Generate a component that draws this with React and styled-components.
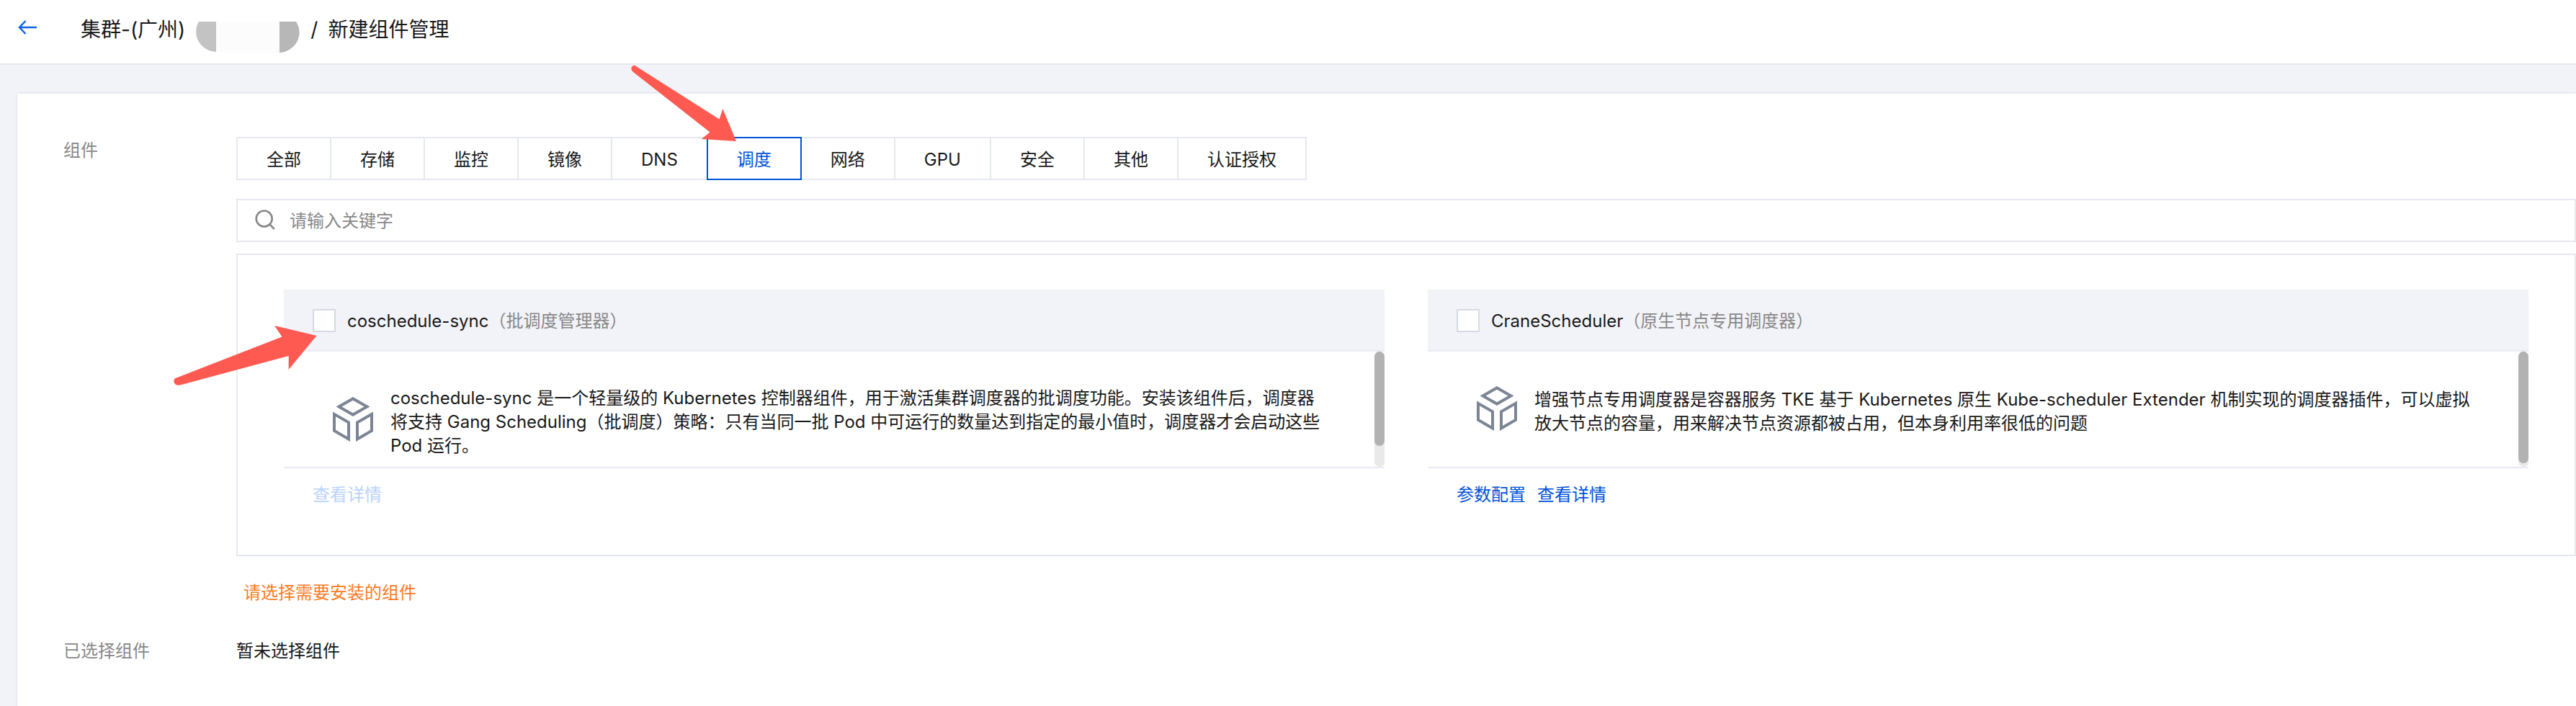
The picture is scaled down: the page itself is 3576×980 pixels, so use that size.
import React from "react";
import styled, { createGlobalStyle } from "styled-components";

const GlobalStyle = createGlobalStyle`
  *, *::before, *::after { box-sizing: border-box; }
  html, body, #root { min-height: 100vh; }
  body {
    margin: 0;
    background: #f2f3f8;
    color: #181818;
    font-family: Inter, "Noto Sans CJK SC", sans-serif;
    font-size: 24px;
    line-height: 33px;
    overflow-x: hidden;
  }
  button, input { font: inherit; color: inherit; }
`;

const Page = styled.div`
  position: relative;
  min-height: 100vh;
  display: flex;
  flex-direction: column;
`;

const Header = styled.header`
  display: flex;
  align-items: center;
  height: 90px;
  padding: 0 24px 6px;
  background: #fff;
  border-bottom: 2px solid #e6e8ef;
  font-size: 28px;
  line-height: 40px;
`;

const BackButton = styled.button`
  display: flex;
  width: 28px;
  margin: 0 60px 6px 0;
  padding: 0;
  border: 0;
  background: none;
`;

const Crumb = styled.h1`
  display: flex;
  align-items: center;
  gap: 14px;
  margin: 0;
  font-size: inherit;
  font-weight: 400;
  white-space: nowrap;
`;

const Mask = styled.svg`
  width: 146px;
  height: 43px;
  margin-top: 21px;
`;

const Panel = styled.main`
  flex: 1;
  margin: 40px 0 0 24px;
  padding: 60px 0 60px 64px;
  background: #fff;
  box-shadow: 0 0 4px rgba(54, 58, 80, 0.12);
`;

const Field = styled.section`
  display: flex;
  margin-bottom: 48px;
`;

const FieldLabel = styled.div`
  flex: 0 0 240px;
  padding-top: ${(p) => (p.$offset ? "2px" : "0")};
  color: #888;
`;

const FieldBody = styled.div`
  flex: 1;
  min-width: 0;
`;

const Tabs = styled.div`
  display: flex;
`;

const Tab = styled.button`
  position: relative;
  z-index: ${(p) => (p.$active ? 1 : 0)};
  height: 60px;
  padding: 2px 40px 0;
  margin-left: -2px;
  border: 2px solid ${(p) => (p.$active ? "#0052d9" : "#e5e8ef")};
  background: #fff;
  color: ${(p) => (p.$active ? "#0052d9" : "inherit")};
  white-space: nowrap;
  &:first-child { margin-left: 0; }
`;

const SearchBox = styled.label`
  display: flex;
  align-items: center;
  gap: 18px;
  height: 60px;
  margin: 26px 0 16px;
  padding: 0 24px;
  border: 2px solid #e5e8ef;
`;

const SearchInput = styled.input`
  flex: 1;
  padding: 0;
  border: 0;
  outline: 0;
  background: none;
  &::placeholder { color: #888; opacity: 1; }
`;

const CardGrid = styled.div`
  display: grid;
  grid-template-columns: 1fr 1fr;
  gap: 60px;
  padding: 48px 64px;
  border: 2px solid #e5e8ef;
`;

const Card = styled.article`
  min-width: 0;
`;

const CardHead = styled.label`
  display: flex;
  align-items: center;
  height: 86px;
  padding: 2px 40px 0;
  background: #f2f3f8;
  border-bottom: 2px solid #e8ebf1;
`;

const Checkbox = styled.input`
  appearance: none;
  width: 32px;
  height: 32px;
  margin: 0 16px 0 0;
  border: 2px solid #d5dae3;
  background: #fff;
`;

const Alias = styled.span`
  color: #888;
`;

const CardBody = styled.div`
  position: relative;
  border-bottom: 2px solid #e8ebf1;
`;

const ScrollArea = styled.div`
  height: 160px;
  overflow-y: auto;
  scrollbar-width: none;
`;

const ScrollTrack = styled.div`
  position: absolute;
  top: 0;
  right: 0;
  bottom: 0;
  width: 14px;
  border-radius: 7px;
  background: #e9e9e9;
`;

const ScrollThumb = styled.div`
  height: ${(p) => p.$size}%;
  border-radius: 7px;
  background: #b2b2b2;
`;

const CardInfo = styled.div`
  display: flex;
  align-items: center;
  gap: 24px;
  padding: 48px 78px 48px 68px;
`;

const CubeBox = styled.div`
  display: flex;
  align-items: flex-start;
  flex: none;
  height: 70px;
`;

const Desc = styled.p`
  flex: 1;
  margin: 0;
`;

const CardFoot = styled.div`
  display: flex;
  gap: 16px;
  height: 72px;
  padding: 20px 40px 0;
`;

const Link = styled.a`
  color: ${(p) => (p.$disabled ? "#bad3fb" : "#0052d9")};
  text-decoration: none;
`;

const Warning = styled.p`
  margin: 34px 0 0 10px;
  color: #ff7a1f;
`;

const Annotations = styled.svg`
  position: absolute;
  top: 0;
  left: 0;
  width: 1100px;
  height: 560px;
  pointer-events: none;
  z-index: 2;
`;

function BackIcon() {
  return (
    <svg width="28" height="20" viewBox="0 0 28 20" fill="none" stroke="#0f62e6" strokeWidth="2.5">
      <path d="M11.500 1 3 10l8.500 9M3 10h24" />
    </svg>
  );
}

function SearchIcon() {
  return (
    <svg width="30" height="30" viewBox="0 0 30 30" fill="none" stroke="#888" strokeWidth="2.6">
      <circle cx="12.700" cy="12.500" r="11" />
      <path d="m20.500 20.500 6.300 6.500" />
    </svg>
  );
}

function CubeIcon() {
  return (
    <svg width="56" height="62" viewBox="0 0 56 62" fill="#7c8594" fillRule="evenodd">
      <path d="M28 0 51.500 13.500 28 27 4.500 13.500zM28 4.700 12.500 13.500 28 22.300 43.500 13.500z" />
      <path d="M0 20.500 24 34.200V62L0 48zM4 27.300V45.700L20 55V36.600z" />
      <path d="M56 20.500 32 34.200V62L56 48zM52 27.300V45.700L36 55V36.600z" />
    </svg>
  );
}

const TABS = ["全部", "存储", "监控", "镜像", "DNS", "调度", "网络", "GPU", "安全", "其他", "认证授权"];

const ADDONS = [
  {
    name: "coschedule-sync",
    alias: "（批调度管理器）",
    desc: "coschedule-sync 是一个轻量级的 Kubernetes 控制器组件，用于激活集群调度器的批调度功能。安装该组件后，调度器将支持 Gang Scheduling（批调度）策略：只有当同一批 Pod 中可运行的数量达到指定的最小值时，调度器才会启动这些 Pod 运行。",
    thumb: 82,
    links: [{ text: "查看详情", disabled: true }],
  },
  {
    name: "CraneScheduler",
    alias: "（原生节点专用调度器）",
    desc: "增强节点专用调度器是容器服务 TKE 基于 Kubernetes 原生 Kube-scheduler Extender 机制实现的调度器插件，可以虚拟放大节点的容量，用来解决节点资源都被占用，但本身利用率很低的问题",
    thumb: 97,
    links: [{ text: "参数配置" }, { text: "查看详情" }],
  },
];

export default function App() {
  return (
    <Page lang="zh-CN">
      <GlobalStyle />
      <Header>
        <BackButton aria-label="返回"><BackIcon /></BackButton>
        <Crumb>
          <span>集群-(广州)</span>
          <Mask viewBox="0 0 146 43" aria-hidden="true">
            <path fill="#fcfcfc" d="M29 0h88v43H29z" />
            <path fill="#c3c3c3" d="M5 0h24v42A29 28 0 0 1 5 0z" />
            <path fill="#b7b7b7" d="M117 0h23a29 28 0 0 1-23 43z" />
          </Mask>
          <span>/</span>
          <span>新建组件管理</span>
        </Crumb>
      </Header>
      <Panel>
        <Field>
          <FieldLabel $offset>组件</FieldLabel>
          <FieldBody>
            <Tabs>
              {TABS.map((t) => (
                <Tab key={t} type="button" $active={t === "调度"}>{t}</Tab>
              ))}
            </Tabs>
            <SearchBox>
              <SearchIcon />
              <SearchInput type="text" placeholder="请输入关键字" aria-label="搜索组件" />
            </SearchBox>
            <CardGrid>
              {ADDONS.map((a) => (
                <Card key={a.name}>
                  <CardHead>
                    <Checkbox type="checkbox" />
                    <span>{a.name}</span>
                    <Alias>{a.alias}</Alias>
                  </CardHead>
                  <CardBody>
                    <ScrollArea>
                      <CardInfo>
                        <CubeBox><CubeIcon /></CubeBox>
                        <Desc>{a.desc}</Desc>
                      </CardInfo>
                    </ScrollArea>
                    <ScrollTrack><ScrollThumb $size={a.thumb} /></ScrollTrack>
                  </CardBody>
                  <CardFoot>
                    {a.links.map((l) => (
                      <Link key={l.text} href="#" $disabled={l.disabled}>{l.text}</Link>
                    ))}
                  </CardFoot>
                </Card>
              ))}
            </CardGrid>
            <Warning>请选择需要安装的组件</Warning>
          </FieldBody>
        </Field>
        <Field>
          <FieldLabel>已选择组件</FieldLabel>
          <FieldBody>暂未选择组件</FieldBody>
        </Field>
      </Panel>
      <Annotations viewBox="0 0 1100 560" fill="#ff5a52" aria-hidden="true">
        <path d="M883 92q-3-3-6 1-2 4 2 7L985.500 183.500 973.700 193 1022 196 1003.300 151 998.600 165.500z" />
        <path d="M243.500 525 391.500 467.500 381 452 439.500 466 400.700 513V494L250 534.500q-7 1-8.500-4-1-4 2-5.500z" />
      </Annotations>
    </Page>
  );
}
